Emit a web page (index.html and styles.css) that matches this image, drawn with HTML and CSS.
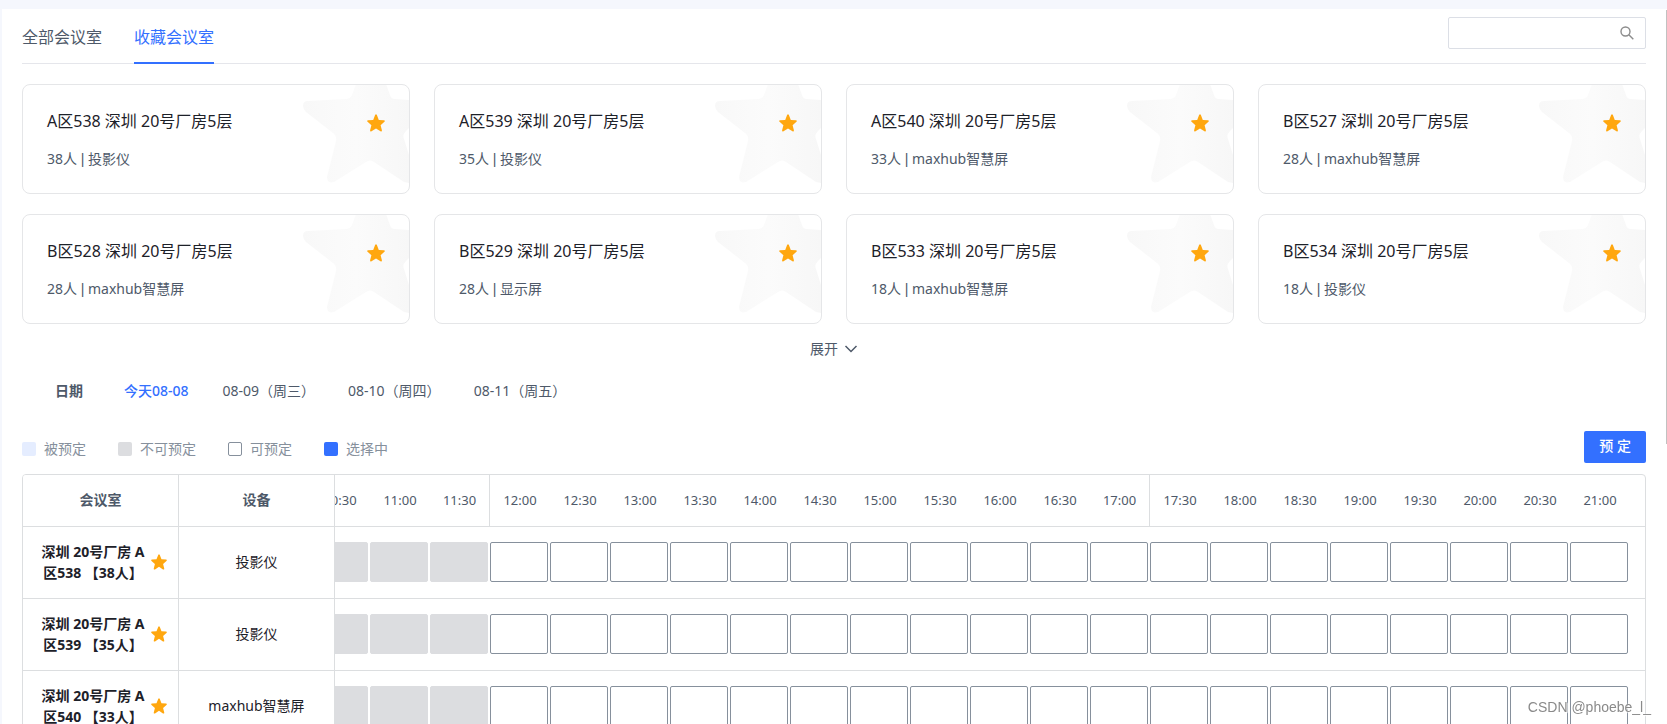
FILE: index.html
```html
<!DOCTYPE html>
<html lang="zh-CN">
<head>
<meta charset="utf-8">
<title>会议室预定</title>
<link rel="stylesheet" href="styles.css">
</head>
<body>
<svg class="sprite" aria-hidden="true">
  <symbol id="star" viewBox="0 0 18 18">
    <path d="M8.1 1.1Q9 -.5 9.9 1.1L11.8 5.9L16.9 6.3Q18.5 6.6 17.4 7.8L13.6 11.2L14.9 16.3Q15 18 13.5 17.3L9 14.4L4.5 17.3Q3 18 3.100 16.300L4.400 11.200L.6 7.8Q-.5 6.600 1.100 6.300L6.200 5.900Z"/>
  </symbol>
  <symbol id="star-bg" viewBox="0 0 110 109">
    <linearGradient id="fade" x1="0" y1="0" x2="1" y2="0">
      <stop offset="0" stop-color="#f8f8f8"/><stop offset=".5" stop-color="#fbfbfb"/><stop offset="1" stop-color="#f7f7f7"/>
    </linearGradient>
    <path fill="url(#fade)" d="M57 -1L53 10Q51 14 47 14L9 16Q4 16 4 21Q4 24 7 27L34 48Q38 51 37 56L28 92Q28 99 35 97L67 77Q71 74 75 77L105 97L110 98V70L105 54Q103 50 107 46L110 43V15L96 14Q92 14 91 10L87 -1Z"/>
  </symbol>
</svg>
<main class="panel">
  <header class="topbar">
    <nav class="tabs">
      <button class="tab" type="button">全部会议室</button>
      <button class="tab tab-active" type="button">收藏会议室</button>
    </nav>
    <div class="search">
      <input class="search-input" type="text" aria-label="搜索">
      <svg class="search-icon" viewBox="0 0 14 14" aria-hidden="true"><circle cx="5.500" cy="5.500" r="4.500"/><path d="M8.800 8.800L13.300 13.300"/></svg>
    </div>
  </header>
  <section class="cards" id="cards"></section>
  <button class="expand" type="button">展开<svg class="chevron" viewBox="0 0 14 8" aria-hidden="true"><path d="M1.500 1L7 6.500L12.500 1"/></svg></button>
  <div class="dates">
    <span class="dates-label">日期</span>
    <button class="date date-active" type="button">今天08-08</button>
    <button class="date" type="button">08-09（周三）</button>
    <button class="date" type="button">08-10（周四）</button>
    <button class="date" type="button">08-11（周五）</button>
  </div>
  <div class="toolbar">
    <ul class="legend">
      <li class="legend-item"><i class="swatch swatch-booked"></i>被预定</li>
      <li class="legend-item"><i class="swatch swatch-disabled"></i>不可预定</li>
      <li class="legend-item"><i class="swatch swatch-free"></i>可预定</li>
      <li class="legend-item"><i class="swatch swatch-selected"></i>选择中</li>
    </ul>
    <button class="book" type="button">预 定</button>
  </div>
  <div class="schedule" id="schedule">
    <table class="grid">
      <thead><tr id="times"><th class="room-col head">会议室</th><th class="device-col head">设备</th></tr></thead>
      <tbody id="rows"></tbody>
    </table>
  </div>
  <div class="scroll-thumb"></div>
</main>
<div class="watermark">CSDN @phoebe_l_</div>
<script src="app.js"></script>
</body>
</html>
```

FILE: styles.css
```css
* { box-sizing: border-box; }
html { scrollbar-width: none; }
body {
  margin: 0;
  background: #f5f7fd;
  color: #4e5969;
  font: 14px/22px "Noto Sans", "Noto Sans CJK SC", sans-serif;
}
button { margin: 0; padding: 0; border: 0; background: none; color: inherit; font: inherit; cursor: pointer; }
.sprite { position: absolute; width: 0; height: 0; }
.panel { position: relative; margin: 9px 0 0 2px; padding: 0 21px 20px 20px; background: #fff; }

.topbar { display: flex; justify-content: space-between; align-items: flex-start; border-bottom: 1px solid #e5e6eb; }
.tabs { display: flex; gap: 32px; margin-bottom: -1px; }
.tab { padding: 16px 0 13px; border-bottom: 2px solid transparent; font-size: 16px; line-height: 24px; }
.tab-active { border-color: #3370ff; color: #3370ff; }
.search { display: flex; align-items: center; width: 198px; height: 32px; margin-top: 8px; padding-right: 11px; border: 1px solid #dcdfe6; border-radius: 2px; }
.search-input { flex: 1; min-width: 0; height: 30px; padding: 0 12px; border: 0; outline: 0; background: none; font: inherit; }
.search-icon { width: 14px; height: 14px; fill: none; stroke: #8c8c8c; stroke-width: 1.4; }

.cards { display: grid; grid-template-columns: repeat(4, 1fr); gap: 20px 24px; margin-top: 20px; }
.card { position: relative; display: flex; justify-content: space-between; align-items: flex-start; padding: 24px 24px 23px; border: 1px solid #e5e6e8; border-radius: 8px; overflow: hidden; }
.card-bg { position: absolute; top: 0; right: 0; width: 110px; height: 109px; }
.card-text { position: relative; }
.card-title { margin: 0 0 15px; color: #1d2129; font-size: 16px; font-weight: 400; line-height: 24px; }
.card-info { margin: 0; }
.bar { font-family: "Liberation Sans", sans-serif; line-height: 1; }
.star { flex: none; fill: #ffa70f; }
.card-star { position: relative; display: flex; margin-top: 5px; }
.card-star .star { width: 18px; height: 18px; }

.expand { display: flex; align-items: center; gap: 6px; margin: 13px auto 0; line-height: 24px; }
.chevron { width: 14px; height: 8px; fill: none; stroke: #4e5969; stroke-width: 1.500; }

.dates { display: flex; margin-top: 19px; padding-left: 33px; }
.dates-label { margin-right: 41px; font-weight: 700; }
.date { margin-right: 33px; }
.date-active { margin-right: 34px; color: #3370ff; font-weight: 500; }

.toolbar { display: flex; justify-content: space-between; align-items: flex-end; margin-top: 29px; }
.legend { display: flex; gap: 32px; margin: 0; padding: 0; list-style: none; color: #86909c; line-height: 28px; }
.legend-item { display: flex; align-items: center; gap: 8px; }
.swatch { width: 14px; height: 14px; border-radius: 2px; }
.swatch-booked { background: #e5edff; }
.swatch-disabled { background: #dcdde0; }
.swatch-free { border: 1px solid #86909c; }
.swatch-selected { background: #3370ff; }
.book { padding: 0 15px 2px; border-radius: 2px; background: #3370ff; color: #fff; font-weight: 500; line-height: 30px; }

.schedule { margin-top: 11px; border: 1px solid #dcdee0; border-radius: 4px; overflow-x: auto; scrollbar-width: none; }
.grid { width: 1647px; min-width: 100%; table-layout: fixed; border-collapse: separate; border-spacing: 0; }
.grid th, .grid td { padding: 0 0 1px; border-bottom: 1px solid #dcdee0; }
.grid thead th { height: 52px; }
.grid td { height: 72px; }
.room-col, .device-col { position: sticky; z-index: 1; width: 156px; background: #fff; text-align: center; }
.room-col, .device-col { border-right: 1px solid #dcdee0; }
.room-col { left: 0; }
.device-col { left: 156px; }
.device-col:not(.head) { color: #1d2129; }
.room { display: flex; align-items: center; gap: 4px; padding: 0 11px 0 16px; color: #1d2129; font-weight: 700; line-height: 21px; }
.room-name { flex: 1; }
.room .star { width: 16px; height: 16px; }
.grid .time { width: 60px; padding-bottom: 2px; font-size: 13px; font-weight: 400; }
.time-end { border-right: 1px solid #dcdee0; }
.slot { display: block; width: 58px; height: 40px; border: 1px solid #86909c; border-radius: 2px; background: #fff; }
.slot:disabled { border-color: #dcdde0; background: #dcdde0; }

.scroll-thumb { position: absolute; top: 1px; right: 0; width: 1px; height: 434px; background: #c1c1c1; }
.watermark { position: fixed; right: 16px; bottom: 6px; color: #8a8a8a; font: 14px/22px "Liberation Sans", sans-serif; text-shadow: 0 0 2px #fff, 1px 1px 1px #fff; }
```

FILE: app.js
```js
const cards = [
  ["A区538", "38人", "投影仪"], ["A区539", "35人", "投影仪"],
  ["A区540", "33人", "maxhub智慧屏"], ["B区527", "28人", "maxhub智慧屏"],
  ["B区528", "28人", "maxhub智慧屏"], ["B区529", "28人", "显示屏"],
  ["B区533", "18人", "maxhub智慧屏"], ["B区534", "18人", "投影仪"]
];
document.getElementById("cards").innerHTML = cards.map(([name, seats, device]) => `
  <article class="card">
    <svg class="card-bg" aria-hidden="true"><use href="#star-bg"/></svg>
    <div class="card-text"><h3 class="card-title">${name} 深圳 20号厂房5层</h3><p class="card-info">${seats} <span class="bar">|</span> ${device}</p></div>
    <button class="card-star" type="button" aria-label="取消收藏"><svg class="star"><use href="#star"/></svg></button>
  </article>`).join("");

// Half-hour slots from 10:30 to 21:00
const times = [];
for (let m = 630; m <= 1260; m += 30) {
  times.push(Math.floor(m / 60) + ":" + String(m % 60).padStart(2, "0"));
}
const periodEnds = ["11:30", "17:00"];
document.getElementById("times").insertAdjacentHTML("beforeend",
  times.map(t => `<th class="time${periodEnds.includes(t) ? " time-end" : ""}">${t}</th>`).join("") + "<th></th>");

const rooms = [
  ["A区538 【38人】", "投影仪"],
  ["A区539 【35人】", "投影仪"],
  ["A区540 【33人】", "maxhub智慧屏"]
];
document.getElementById("rows").innerHTML = rooms.map(([name, device]) => `
  <tr>
    <td class="room-col"><div class="room"><span class="room-name">深圳 20号厂房 ${name}</span><svg class="star" aria-hidden="true"><use href="#star"/></svg></div></td>
    <td class="device-col">${device}</td>
    ${times.map((t, i) => `<td><button class="slot" type="button" aria-label="${t}"${i < 3 ? " disabled" : ""}></button></td>`).join("")}<td></td>
  </tr>`).join("");

const schedule = document.getElementById("schedule");
schedule.scrollLeft = schedule.scrollWidth;
```
